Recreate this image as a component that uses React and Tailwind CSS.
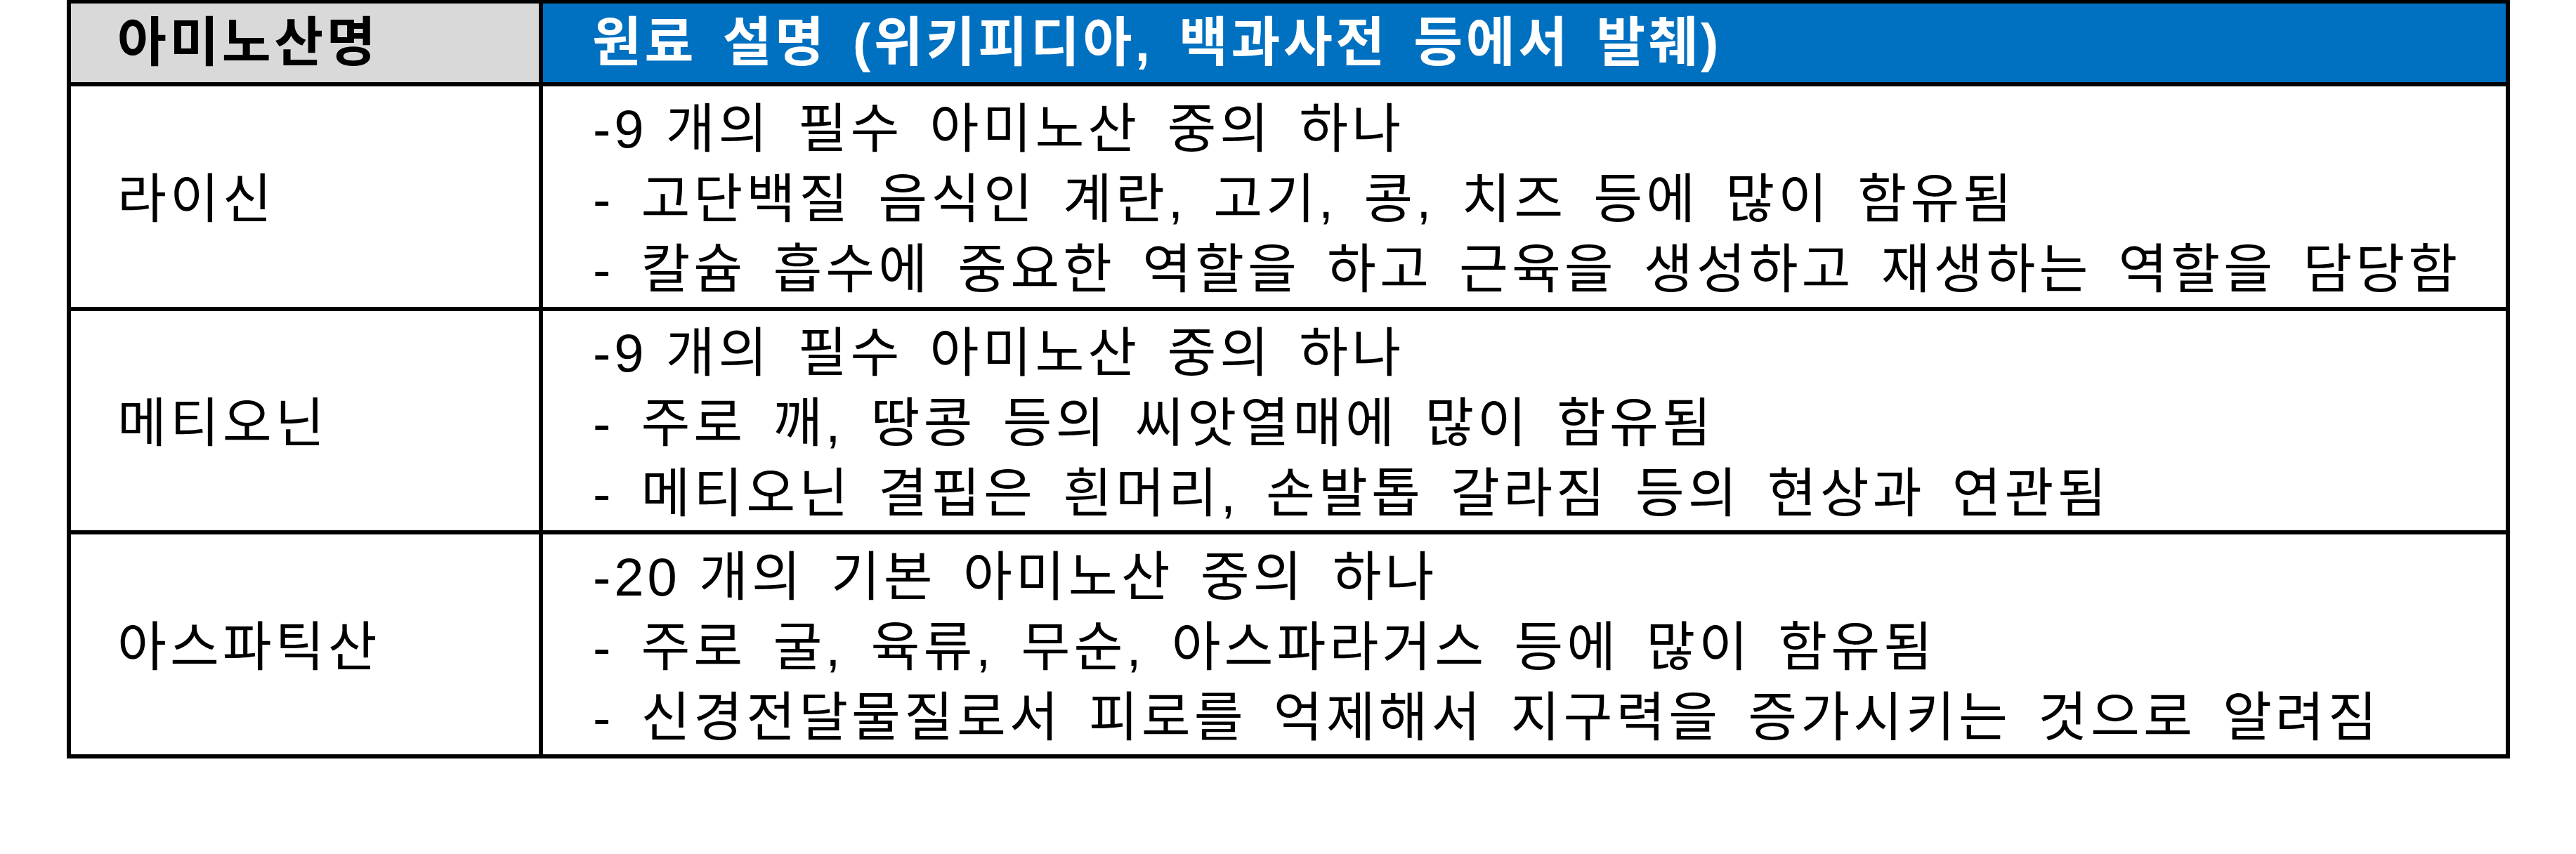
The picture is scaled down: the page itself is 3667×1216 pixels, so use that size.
export default function App() {
  const font = { fontFamily: '"Liberation Sans", "Noto Sans CJK KR", sans-serif' };
  const rows = [
    {
      name: "라이신",
      lines: [
        ["-9 ", "개의 필수 아미노산 중의 하나"],
        ["", "- 고단백질 음식인 계란, 고기, 콩, 치즈 등에 많이 함유됨"],
        ["", "- 칼슘 흡수에 중요한 역할을 하고 근육을 생성하고 재생하는 역할을 담당함"],
      ],
      h: "h-[320px] border-b-[6px] border-black",
    },
    {
      name: "메티오닌",
      lines: [
        ["-9 ", "개의 필수 아미노산 중의 하나"],
        ["", "- 주로 깨, 땅콩 등의 씨앗열매에 많이 함유됨"],
        ["", "- 메티오닌 결핍은 흰머리, 손발톱 갈라짐 등의 현상과 연관됨"],
      ],
      h: "h-[318px] border-b-[6px] border-black",
    },
    {
      name: "아스파틱산",
      lines: [
        ["-20 ", "개의 기본 아미노산 중의 하나"],
        ["", "- 주로 굴, 육류, 무순, 아스파라거스 등에 많이 함유됨"],
        ["", "- 신경전달물질로서 피로를 억제해서 지구력을 증가시키는 것으로 알려짐"],
      ],
      h: "h-[313px]",
    },
  ];
  return (
    <div className="w-[3667px] h-[1216px] bg-white" style={font}>
      <div className="ml-[95px] w-[3478px] border-x-[6px] border-t-[5px] border-b-[6px] border-black text-[76px] leading-[100px] text-black">
        <div className="flex h-[118px] border-b-[6px] border-black font-bold">
          <div className="w-[672px] shrink-0 border-r-[6px] border-black bg-[#d9d9d9] flex items-center pl-[66px] tracking-[4.5px]">
            아미노산명
          </div>
          <div className="flex-1 bg-[#0070c0] text-white flex items-center pl-[70px] tracking-[4.5px] [word-spacing:11px]">
            원료 설명 (위키피디아, 백과사전 등에서 발췌)
          </div>
        </div>
        {rows.map((r) => (
          <div key={r.name} className={`flex ${r.h}`}>
            <div className="w-[672px] shrink-0 border-r-[6px] border-black flex items-center pl-[66px] pt-[8px] tracking-[5px]">
              {r.name}
            </div>
            <div className="flex-1 flex flex-col justify-center pl-[71px] pt-[8px] tracking-[5px] [word-spacing:12px]">
              {r.lines.map((l, j) => (
                <div key={j} className="whitespace-nowrap">
                  {l[0] && <span className="[word-spacing:0px]">{l[0]}</span>}
                  {l[1]}
                </div>
              ))}
            </div>
          </div>
        ))}
      </div>
    </div>
  );
}
